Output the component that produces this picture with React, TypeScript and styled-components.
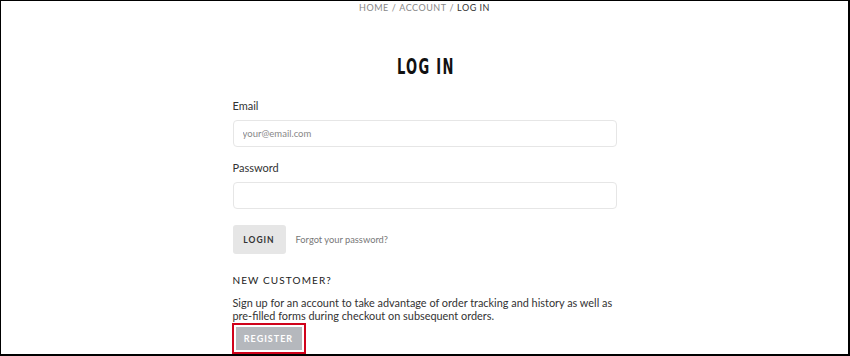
import React from "react";
import styled, { createGlobalStyle } from "styled-components";

const GlobalStyle = createGlobalStyle`
  html, body {
    margin: 0;
    padding: 0;
    background: #ffffff;
  }
  * {
    box-sizing: border-box;
  }
`;

export default function App() {
  return (
    <>
      <GlobalStyle />
      <Frame>
        <Breadcrumb>
          <Crumb>Home</Crumb>
          <Sep>/</Sep>
          <Crumb>Account</Crumb>
          <Sep>/</Sep>
          <Crumb $current>Log in</Crumb>
        </Breadcrumb>
        <Title>
          <TitleText>Log in</TitleText>
        </Title>
        <Form onSubmit={(e) => e.preventDefault()}>
          <Label htmlFor="email">Email</Label>
          <Input id="email" type="email" placeholder="your@email.com" />
          <Label htmlFor="password">Password</Label>
          <Input id="password" type="password" />
          <Actions>
            <LoginButton type="submit">Login</LoginButton>
            <ForgotLink href="#">Forgot your password?</ForgotLink>
          </Actions>
          <SubHeading>New customer?</SubHeading>
          <Blurb>
            Sign up for an account to take advantage of order tracking and
            history as well as pre-filled forms during checkout on subsequent
            orders.
          </Blurb>
          <Highlight>
            <RegisterButton type="button">Register</RegisterButton>
          </Highlight>
        </Form>
      </Frame>
    </>
  );
}

const Frame = styled.div`
  width: 850px;
  height: 356px;
  overflow: hidden;
  border-style: solid;
  border-color: #000;
  border-width: 1px 2px 2px 1px;
  font-family: Lato, "Liberation Sans", sans-serif;
  color: #333;
  display: flex;
  flex-direction: column;
  align-items: center;
`;

const Breadcrumb = styled.nav`
  display: flex;
  gap: 3px;
  margin-top: 1px;
  font-size: 9px;
  line-height: 12px;
  letter-spacing: 0.5px;
  text-transform: uppercase;
  color: #888;
`;

const Crumb = styled.span<{ $current?: boolean }>`
  color: ${(p) => (p.$current ? "#333" : "#888")};
`;

const Sep = styled.span`
  color: #888;
`;

const Title = styled.h1`
  margin: 39px 0 0;
  padding-left: 2px;
  font-family: "DejaVu Sans Condensed", "Liberation Sans", sans-serif;
  font-weight: bold;
  font-size: 22px;
  line-height: 28px;
  letter-spacing: 2px;
  text-transform: uppercase;
  color: #111;
`;

const TitleText = styled.span`
  display: inline-block;
  transform: scaleX(0.66);
`;

const Form = styled.form`
  width: 384px;
  margin-top: 18px;
  display: flex;
  flex-direction: column;
  align-items: flex-start;
`;

const Label = styled.label`
  font-size: 11px;
  line-height: 14px;
  color: #333;
  margin-bottom: 7px;
`;

const Input = styled.input`
  width: 100%;
  height: 27px;
  margin-bottom: 14px;
  padding: 0 9px;
  border: 1px solid #e6e6e6;
  border-radius: 4px;
  font-family: inherit;
  font-size: 9.5px;
  color: #333;
  outline: none;
  &::placeholder {
    color: #888;
  }
`;

const Actions = styled.div`
  display: flex;
  align-items: center;
  gap: 10px;
  margin-top: 2px;
`;

const LoginButton = styled.button`
  height: 29px;
  width: 53px;
  padding: 0;
  border: none;
  border-radius: 3px;
  background: #e6e6e6;
  font-family: inherit;
  font-weight: bold;
  font-size: 8.5px;
  letter-spacing: 1px;
  text-transform: uppercase;
  color: #333;
  cursor: pointer;
`;

const ForgotLink = styled.a`
  font-size: 9.3px;
  color: #777;
  text-decoration: none;
`;

const SubHeading = styled.h2`
  margin: 19px 0 0;
  font-size: 10px;
  line-height: 14px;
  font-weight: normal;
  letter-spacing: 1.1px;
  text-transform: uppercase;
  color: #222;
`;

const Blurb = styled.p`
  margin: 9px 0 0;
  font-size: 10.9px;
  line-height: 13px;
  color: #333;
`;

const Highlight = styled.div`
  margin-top: 1px;
  margin-left: -1px;
  padding: 2px;
  border: 2px solid #d0021b;
`;

const RegisterButton = styled.button`
  display: block;
  height: 23px;
  width: 66px;
  border: none;
  background: #b5b8bd;
  font-family: inherit;
  font-weight: bold;
  font-size: 9px;
  letter-spacing: 1px;
  text-transform: uppercase;
  color: #fff;
  cursor: pointer;
`;
